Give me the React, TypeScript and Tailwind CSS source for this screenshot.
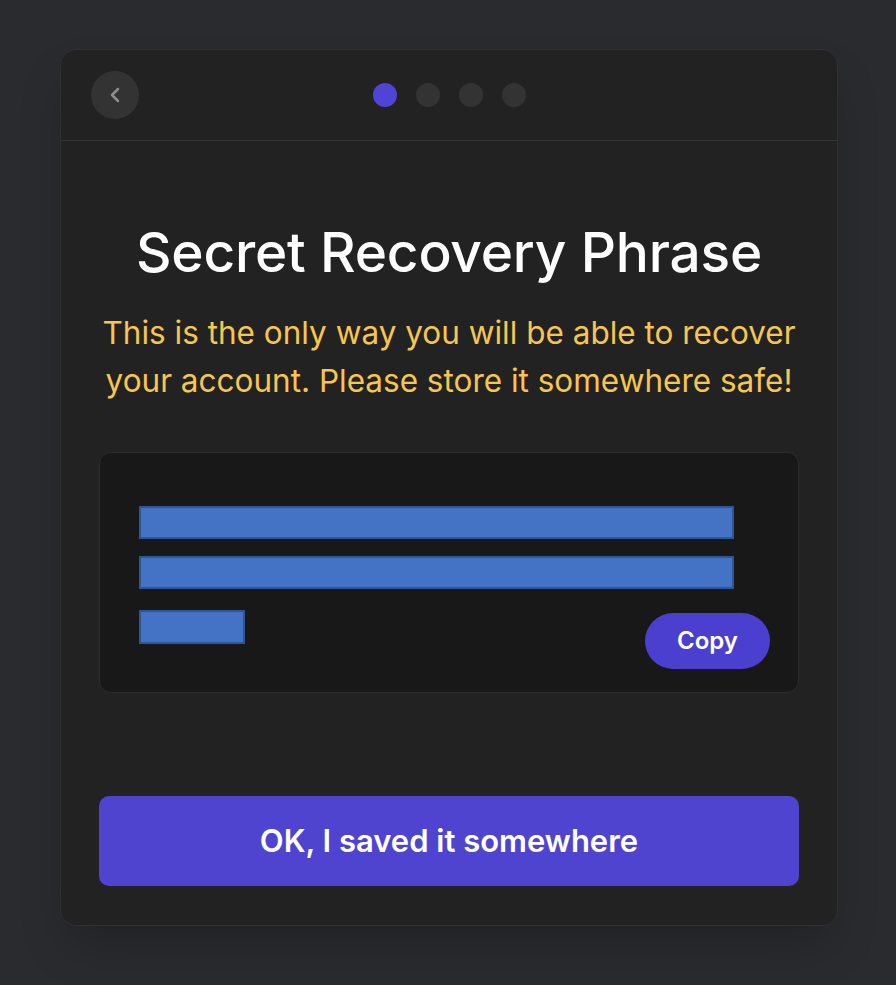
import { ChevronLeft } from 'lucide-react'

// ---------------------------------------------------------------------------
// Recovery phrase step
// ---------------------------------------------------------------------------

const STEPS = 4
const ACTIVE = 0

function StepDots() {
  return (
    <div className="flex items-center gap-[19px]">
      {Array.from({ length: STEPS }).map((_, i) => (
        <span
          key={i}
          className={`h-6 w-6 rounded-full ${i === ACTIVE ? 'bg-[#5044d6]' : 'bg-[#333333]'}`}
        />
      ))}
    </div>
  )
}

export default function App() {
  return (
    <div
      className="min-h-screen bg-[#2a2b2f] pt-[49px] pl-[60px]"
      style={{ fontFamily: 'Inter, "Noto Sans", sans-serif' }}
    >
      <div className="flex h-[877px] w-[778px] flex-col rounded-2xl border border-[#303033] bg-[#222222] shadow-2xl">
        {/* Header */}
        <div className="relative flex h-[91px] shrink-0 items-center justify-center border-b border-[#333333]">
          <button
            type="button"
            className="absolute left-[30px] flex h-12 w-12 items-center justify-center rounded-full bg-[#333333] text-[#8f8f8f]"
          >
            <ChevronLeft size={24} strokeWidth={2.5} />
          </button>
          <StepDots />
        </div>

        {/* Body */}
        <div className="flex flex-1 flex-col px-[38px] pt-[79px]">
          <h1 className="text-center text-[55px] font-medium leading-[64px] tracking-[-0.2px] text-white">
            Secret Recovery Phrase
          </h1>
          <p className="mt-[25px] text-center text-[31.5px] leading-[48px] text-[#f6c64e]">
            This is the only way you will be able to recover your account. Please store it somewhere safe!
          </p>

          {/* Phrase box */}
          <div className="mt-[47px] flex h-[241px] flex-col rounded-xl border border-[#2c2c2c] bg-[#181818] pl-[39px] pr-[28px] pt-[53px]">
            <div className="h-[33px] w-[595px] border-2 border-[#2f5597] bg-[#4472c4]" />
            <div className="mt-[17px] h-[33px] w-[595px] border-2 border-[#2f5597] bg-[#4472c4]" />
            <div className="mt-[21px] flex items-start justify-between">
              <div className="h-[34px] w-[106px] border-2 border-[#2f5597] bg-[#4472c4]" />
              <button
                type="button"
                className="mt-[3px] h-[56px] w-[125px] rounded-full bg-[#4a3fcf] text-[24px] font-semibold text-white"
              >
                Copy
              </button>
            </div>
          </div>

          {/* Confirm */}
          <button
            type="button"
            className="mt-[103px] h-[90px] w-full rounded-[10px] bg-[#4f44d0] text-[31px] font-semibold text-white"
          >
            OK, I saved it somewhere
          </button>
        </div>
      </div>
    </div>
  )
}
